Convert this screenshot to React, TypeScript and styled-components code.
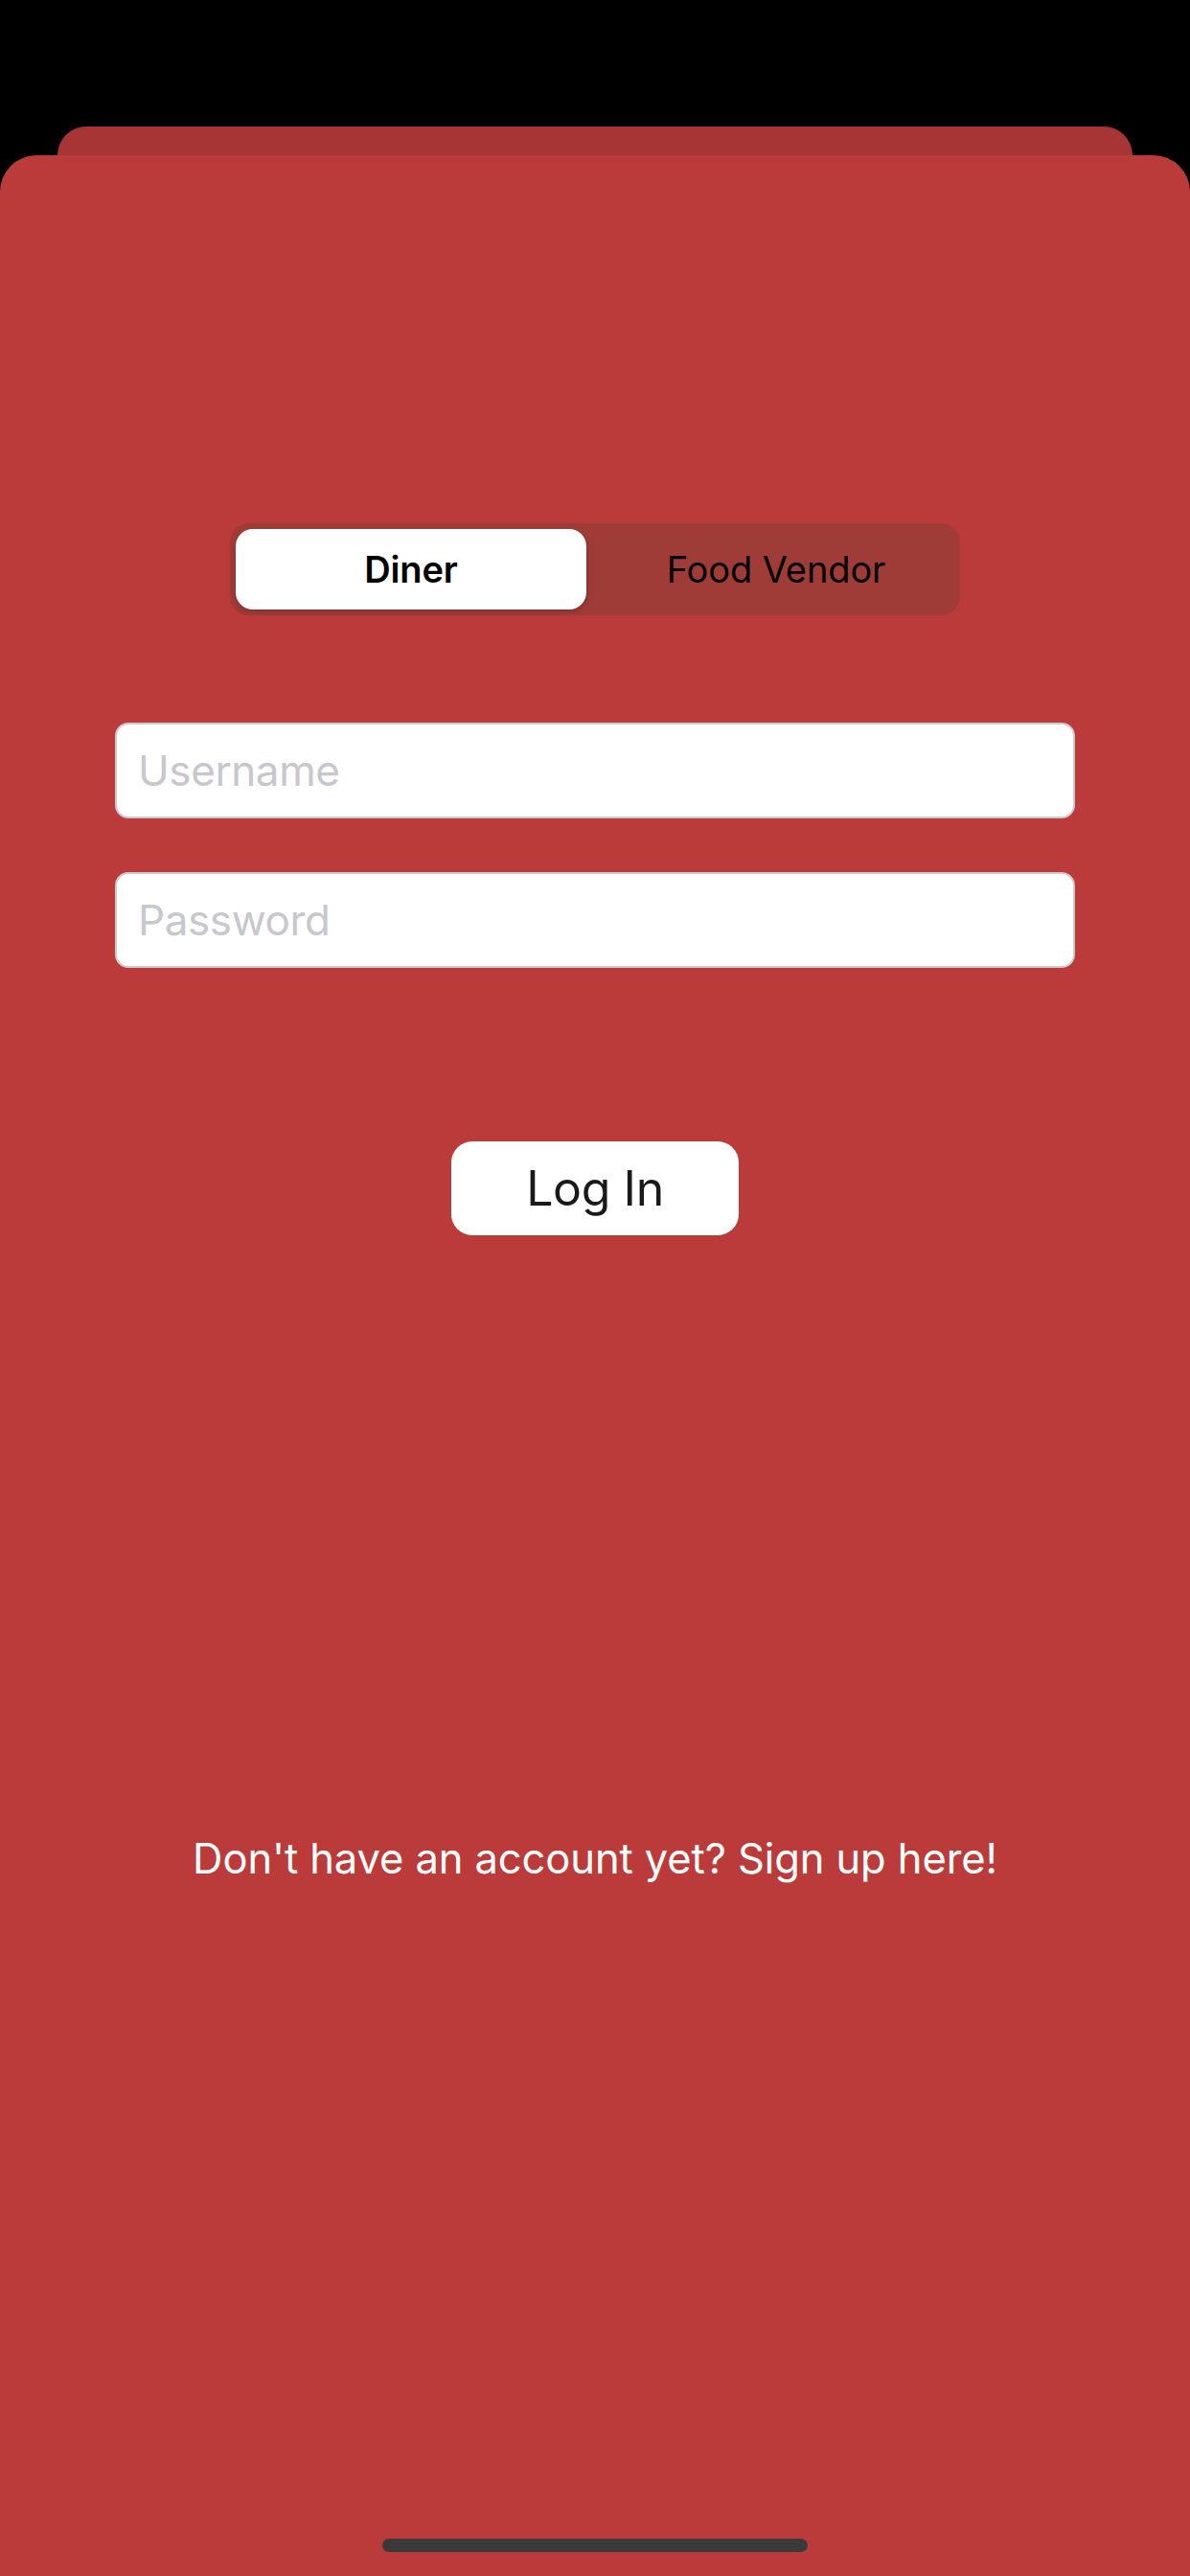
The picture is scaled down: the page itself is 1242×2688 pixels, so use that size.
import styled, { createGlobalStyle } from "styled-components";

const GlobalStyle = createGlobalStyle`
  html, body {
    margin: 0;
    padding: 0;
    background: #000;
  }

  body {
    font-family: Inter, "Liberation Sans", sans-serif;
    -webkit-font-smoothing: antialiased;
  }
`;

const Screen = styled.div`
  display: flex;
  flex-direction: column;
  width: 1242px;
  height: 2688px;
  padding-top: 132px;
  box-sizing: border-box;
  overflow: hidden;
  background: #000;
`;

const BackSheet = styled.div`
  flex: none;
  height: 30px;
  margin: 0 60px;
  border-radius: 30px 30px 0 0;
  background: #a73535;
`;

const Sheet = styled.div`
  flex: 1;
  display: flex;
  flex-direction: column;
  align-items: center;
  padding-top: 384px;
  border-radius: 38px 38px 0 0;
  background: #bb3b3b;
`;

const Segmented = styled.div`
  display: grid;
  grid-template-columns: 366px 1fr;
  width: 762px;
  height: 96px;
  padding: 6px;
  box-sizing: border-box;
  border-radius: 20px;
  background: #a03c38;
`;

const Segment = styled.button<{ $active?: boolean }>`
  border: none;
  border-radius: 18px;
  padding: ${(p) => (p.$active ? "0" : "0 0 0 12px")};
  font-family: Inter, "Liberation Sans", sans-serif;
  font-size: 38px;
  font-weight: ${(p) => (p.$active ? 600 : 400)};
  letter-spacing: -0.1px;
  color: #000;
  background: ${(p) => (p.$active ? "#fff" : "transparent")};
  box-shadow: ${(p) =>
    p.$active
      ? "0 3px 8px rgba(0, 0, 0, 0.14), 2px 2px 2px rgba(0, 0, 0, 0.06)"
      : "none"};
  cursor: pointer;
`;

const Form = styled.div`
  display: flex;
  flex-direction: column;
  gap: 56px;
  margin-top: 112px;
`;

const Field = styled.input`
  width: 1002px;
  height: 100px;
  box-sizing: border-box;
  padding: 0 22px;
  border: 2px solid #cbcbcb;
  border-radius: 14px;
  background: #fff;
  font-family: Inter, "Liberation Sans", sans-serif;
  font-size: 44px;
  letter-spacing: -0.4px;
  color: #111;
  outline: none;

  &::placeholder {
    color: #c7c7cd;
  }
`;

const LoginButton = styled.button`
  width: 300px;
  height: 98px;
  margin-top: 181px;
  border: none;
  border-radius: 22px;
  background: #fff;
  font-family: Inter, "Liberation Sans", sans-serif;
  font-size: 50px;
  font-weight: 400;
  letter-spacing: -0.4px;
  color: #1a1a1a;
  cursor: pointer;
`;

const SignUp = styled.div`
  margin-top: 628px;
  font-size: 43.5px;
  line-height: 44px;
  letter-spacing: -0.1px;
  color: #fff;
`;

const Spacer = styled.div`
  flex: 1;
`;

const HomeIndicator = styled.div`
  width: 444px;
  height: 14px;
  margin-bottom: 25px;
  border-radius: 7px;
  background: #3a3a3a;
`;

export default function App() {
  return (
    <>
      <GlobalStyle />
      <Screen>
        <BackSheet />
        <Sheet>
          <Segmented>
            <Segment $active>Diner</Segment>
            <Segment>Food Vendor</Segment>
          </Segmented>

          <Form>
            <Field placeholder="Username" />
            <Field type="password" placeholder="Password" />
          </Form>

          <LoginButton>Log In</LoginButton>

          <SignUp>Don't have an account yet? Sign up here!</SignUp>

          <Spacer />
          <HomeIndicator />
        </Sheet>
      </Screen>
    </>
  );
}
